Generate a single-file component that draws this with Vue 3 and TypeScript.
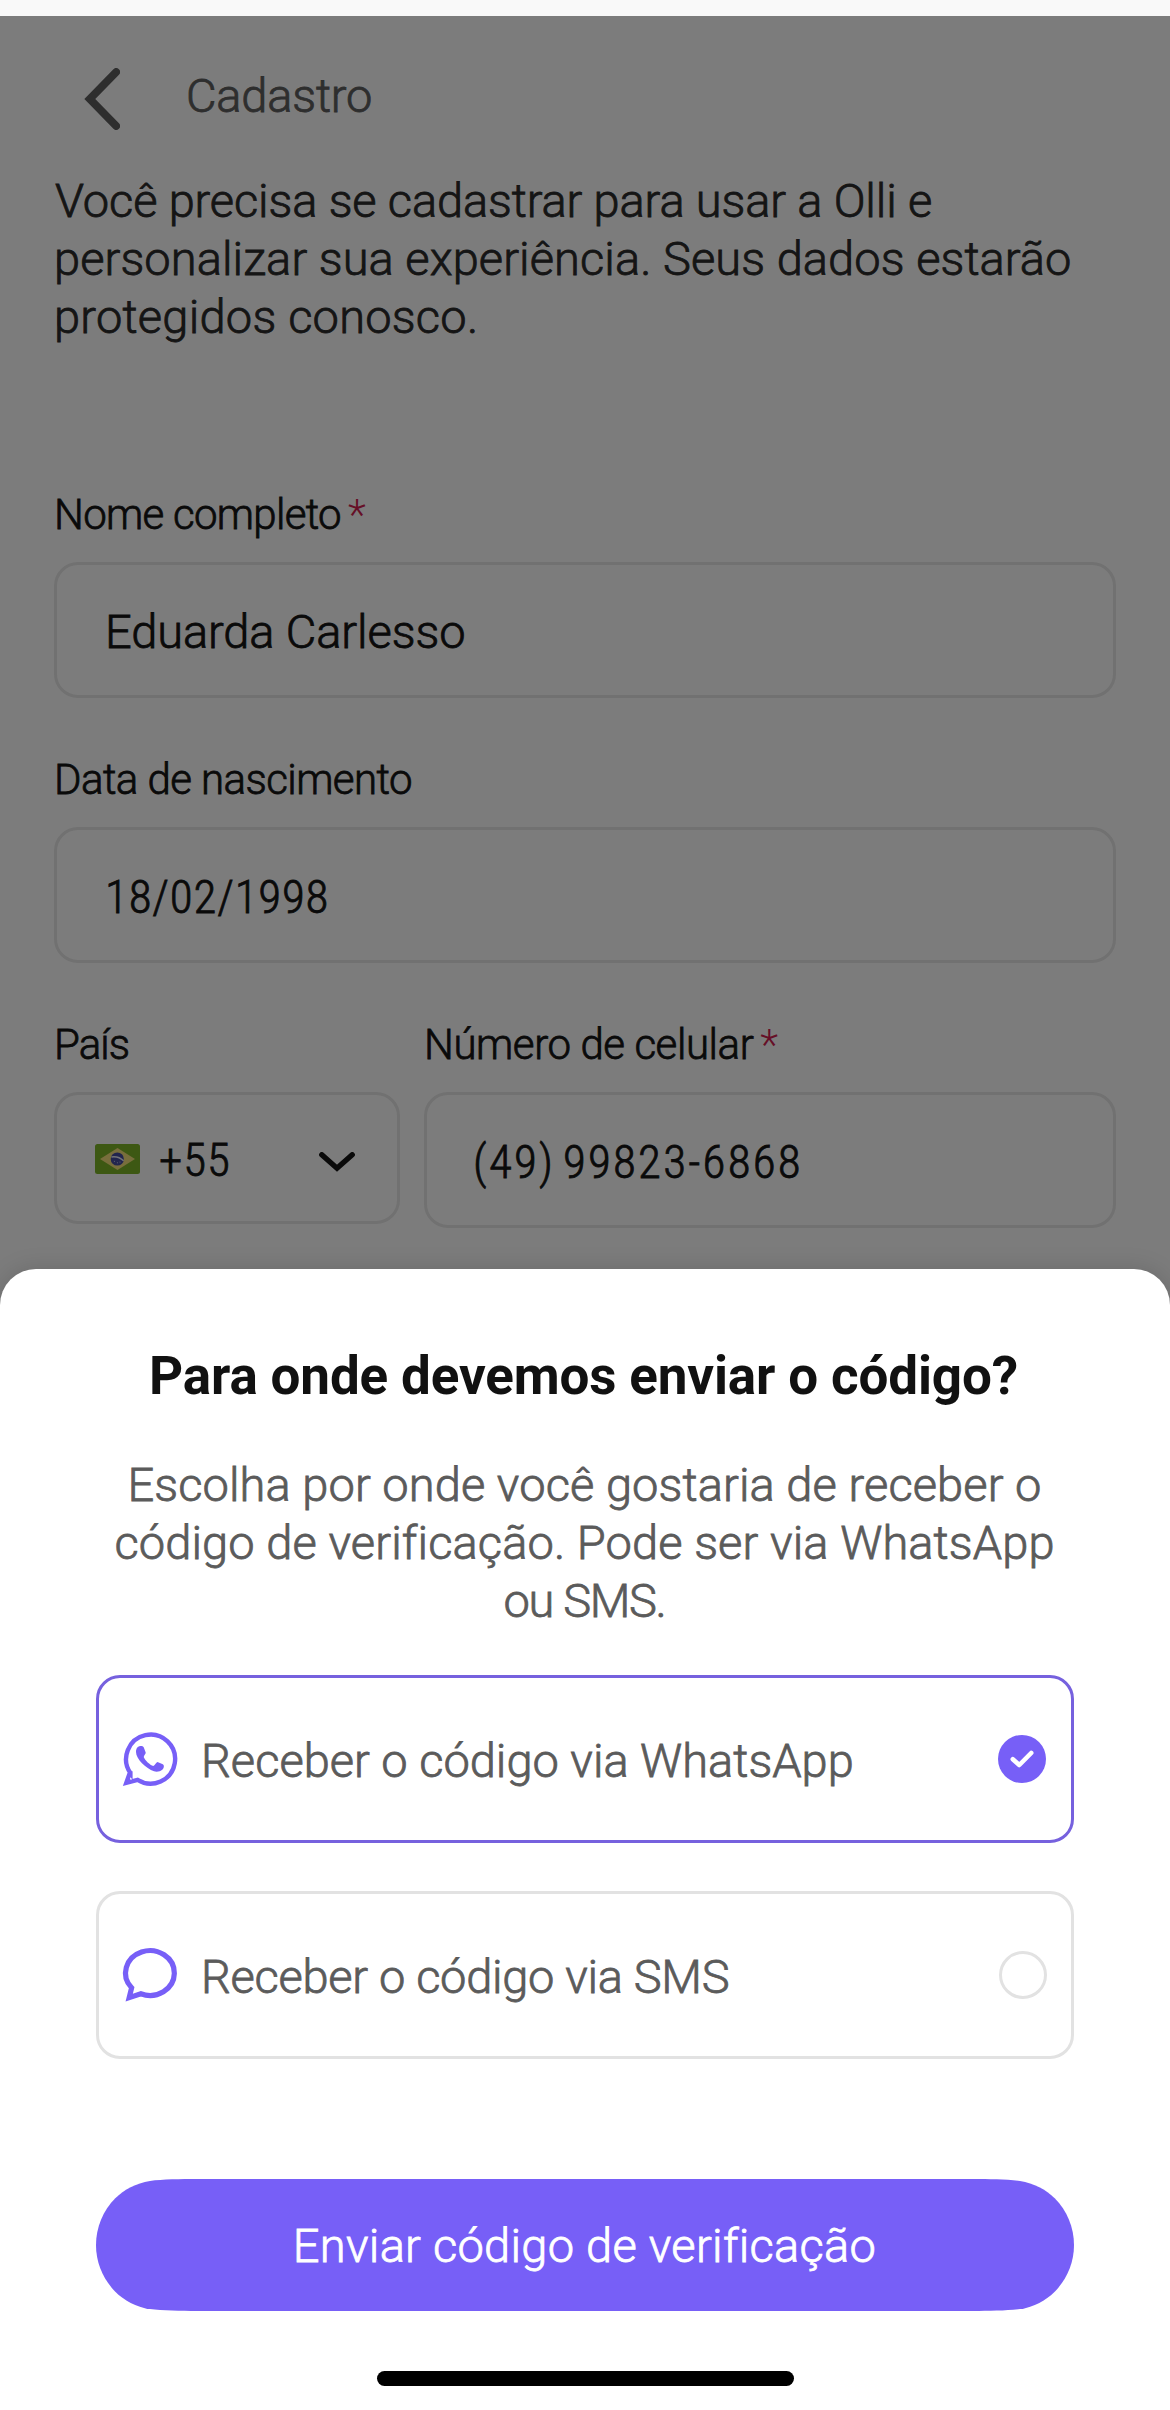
<script setup lang="ts">
import { ref } from 'vue'

type Channel = 'whatsapp' | 'sms'

const selected = ref<Channel>('whatsapp')

const channels: { id: Channel; label: string }[] = [
  { id: 'whatsapp', label: 'Receber o código via WhatsApp' },
  { id: 'sms', label: 'Receber o código via SMS' },
]
</script>

<template>
  <div class="screen">
    <main class="page">
      <header class="topbar">
        <svg class="back" viewBox="0 0 36 62" aria-hidden="true">
          <polyline points="32.2,4 5.8,31 32.2,58" />
        </svg>
        <h1 class="topbar-title">Cadastro</h1>
      </header>

      <p class="intro">
        <span class="l1">Você precisa se cadastrar para usar a Olli e</span>
        <span class="l2">personalizar sua experiência. Seus dados estarão</span>
        <span class="l3">protegidos conosco.</span>
      </p>

      <form class="form">
        <div class="field">
          <div class="label name">Nome completo<span class="req">*</span></div>
          <div class="input"><span class="person">Eduarda Carlesso</span></div>
        </div>
        <div class="field">
          <div class="label birth">Data de nascimento</div>
          <div class="input"><span class="date">18/02/1998</span></div>
        </div>
        <div class="row">
          <div class="field">
            <div class="label country">País</div>
            <div class="input select">
              <svg class="flag" viewBox="0 0 45 30" aria-hidden="true">
                <rect width="45" height="30" rx="2.5" fill="#7ab026" />
                <path d="M22.5 4 40 15 22.5 26 5 15Z" fill="#f0dc78" />
                <circle cx="22.3" cy="15" r="6.6" fill="#454a9c" />
                <path d="M16.4 12.9C20.5 12.3 25.5 13.7 28.6 16.8" fill="none" stroke="#e4e6f2" stroke-width="1.5" />
                <circle cx="19.4" cy="17.2" r=".5" fill="#dfe2f0" />
                <circle cx="22.4" cy="18.8" r=".5" fill="#dfe2f0" />
                <circle cx="25" cy="18" r=".5" fill="#dfe2f0" />
              </svg>
              <span class="ddi">+55</span>
              <svg class="caret" viewBox="0 0 36 20" aria-hidden="true">
                <polyline points="2.8,2.8 18,16.2 33.2,2.8" />
              </svg>
            </div>
          </div>
          <div class="field">
            <div class="label mobile">Número de celular<span class="req">*</span></div>
            <div class="input"><span class="phone">(49) 99823-6868</span></div>
          </div>
        </div>
      </form>
      <div class="overlay"></div>
    </main>

    <section class="sheet">
      <h2 class="sheet-title">Para onde devemos enviar o código?</h2>
      <p class="sheet-text">
        <span class="t1">Escolha por onde você gostaria de receber o</span>
        <span class="t2">código de verificação. Pode ser via WhatsApp</span>
        <span class="t3">ou SMS.</span>
      </p>

      <div class="options">
        <div
          v-for="c in channels"
          :key="c.id"
          class="option"
          :class="[c.id, { active: selected === c.id }]"
          @click="selected = c.id"
        >
          <svg v-if="c.id === 'whatsapp'" class="icon" viewBox="0 0 54 54" aria-hidden="true">
            <path class="line" stroke-width="4.4" d="M7.4 39.2 3.3 50.8 14.6 47.9A24.5 24.5 0 1 0 7.4 41Z" />
            <path
              class="solid"
              d="M13 20C13 16 15 14 18 14 19.5 14 20.5 14.6 21 16L22.7 20.5C23 21.8 21 23.2 20.7 25 22 28.4 27 33 30.3 34 31.8 33.4 33 30.4 34.5 30L39.8 32.2C41.5 33 41 36 39.5 37.5 37 40 33 40 31 39.3 23 36.5 13 27 13 20Z"
            />
          </svg>
          <svg v-else class="icon" viewBox="0 0 54 54" aria-hidden="true">
            <path class="line" stroke-width="5.2" d="M8.6 39.8 6.2 49.6 17.8 45.8A24.4 22.4 0 1 0 8.6 39.8Z" />
          </svg>
          <span class="option-label">{{ c.label }}</span>
          <svg v-if="selected === c.id" class="check" viewBox="0 0 48 48" aria-hidden="true">
            <circle cx="24" cy="24" r="24" />
            <polyline points="14.8,24.2 21.3,30 33.2,18" />
          </svg>
          <span v-else class="radio"></span>
        </div>
      </div>

      <button class="submit" type="button"><span>Enviar código de verificação</span></button>
      <div class="home-indicator"></div>
    </section>
  </div>
</template>

<style>
body {
  margin: 0;
  background: #fff;
}
</style>

<style scoped>
.screen {
  display: flex;
  flex-direction: column;
  width: 1170px;
  height: 2410px;
  overflow: hidden;
  box-sizing: border-box;
  border-top: 16px solid #f9f9f9;
  font-family: Roboto, 'Liberation Sans', sans-serif;
  font-weight: 300;
  font-size: 47px;
  -webkit-text-stroke: 0.8px currentColor;
  background: #7c7c7c;
}
.page {
  position: relative;
  box-sizing: border-box;
  height: 1253px;
  padding: 52px 54px 0;
  background: #f9f9f9;
}
.overlay {
  position: absolute;
  inset: 0;
  background: rgba(0, 0, 0, 0.5);
}
.topbar {
  display: flex;
  height: 64px;
  padding-left: 30px;
  color: #5c5c5c;
}
.back {
  width: 36px;
  height: 62px;
  margin-right: 66px;
  fill: none;
  stroke: currentColor;
  stroke-width: 7.8;
  stroke-linecap: round;
}
.topbar-title {
  margin: 0;
  font: inherit;
  line-height: 56px;
  letter-spacing: -0.19px;
}
.intro {
  margin: 40px 0 0;
  line-height: 58px;
  color: #2a2a2a;
  white-space: nowrap;
}
.intro span,
.sheet-text span {
  display: block;
}
.l1 { letter-spacing: -0.13px; padding-left: 1px; }
.l2 { letter-spacing: 0.07px; }
.l3 { letter-spacing: 0.23px; }
.form {
  display: flex;
  flex-direction: column;
  gap: 58px;
  margin-top: 145px;
  color: #141414;
}
.label {
  height: 48px;
  margin-bottom: 23px;
  font-size: 42px;
  line-height: 48px;
  white-space: nowrap;
}
.name { letter-spacing: -0.71px; }
.birth { letter-spacing: -0.57px; }
.country { letter-spacing: -0.9px; }
.mobile { letter-spacing: -0.43px; }
.req {
  margin-left: 7px;
  color: #cc1f4f;
  -webkit-text-stroke: 0;
}
.input {
  display: flex;
  align-items: center;
  box-sizing: border-box;
  height: 136px;
  padding: 3px 48px 0;
  border: 3px solid #e2e2e2;
  border-radius: 24px;
}
.person { letter-spacing: -0.1px; }
.date,
.ddi,
.phone {
  font-stretch: 75%;
}
.date { letter-spacing: 0.8px; }
.phone { letter-spacing: 2.2px; word-spacing: -5px; margin-left: -2px; }
.ddi { letter-spacing: 1px; margin-left: 19px; }
.row {
  display: grid;
  grid-template-columns: 346px 1fr;
  gap: 24px;
}
.select {
  height: 132px;
  padding: 2px 42px 0 38px;
}
.flag {
  width: 45px;
  height: 30px;
}
.caret {
  width: 36px;
  height: 20px;
  margin: 5px 0 0 auto;
  fill: none;
  stroke: #141414;
  stroke-width: 5.4;
  stroke-linecap: round;
}
.sheet {
  position: relative;
  flex: 1;
  display: flex;
  flex-direction: column;
  align-items: center;
  padding: 75px 96px 0;
  border-radius: 36px 36px 0 0;
  background: #fff;
  box-shadow: 0 0 24px rgba(0, 0, 0, 0.14);
}
.sheet-title {
  margin: 0 3px 0 0;
  font-size: 53px;
  font-weight: 700;
  line-height: 64px;
  letter-spacing: -0.16px;
  color: #111;
  white-space: nowrap;
  -webkit-text-stroke: 0;
}
.sheet-text {
  margin: 48px 1px 45px 0;
  line-height: 58px;
  text-align: center;
  color: #5b5b5b;
  white-space: nowrap;
}
.t1 { letter-spacing: 0.09px; }
.t2 { letter-spacing: 0.1px; }
.t3 { letter-spacing: -1.3px; }
.options {
  display: flex;
  flex-direction: column;
  gap: 48px;
  width: 100%;
}
.option {
  display: flex;
  align-items: center;
  box-sizing: border-box;
  height: 168px;
  padding: 0 24px;
  border: 3px solid #e2e2e2;
  border-radius: 24px;
}
.option.active {
  border-color: #7661de;
}
.icon {
  width: 54px;
  height: 54px;
  overflow: visible;
}
.line {
  fill: none;
  stroke: #775ff7;
}
.solid {
  fill: #775ff7;
}
.option-label {
  margin: 3px auto 0 24px;
  color: #5b5b5b;
  white-space: nowrap;
}
.sms .option-label {
  letter-spacing: -0.3px;
}
.check {
  width: 48px;
  height: 48px;
  margin-right: 1px;
}
.check circle {
  fill: #775ff7;
}
.check polyline {
  fill: none;
  stroke: #fff;
  stroke-width: 4.6;
  stroke-linecap: round;
  stroke-linejoin: round;
}
.radio {
  box-sizing: border-box;
  width: 48px;
  height: 48px;
  border: 3px solid #e2e2e2;
  border-radius: 50%;
}
.submit {
  width: 978px;
  height: 132px;
  margin: 120px 0 60px;
  padding: 1px 1px 0 0;
  border: 0;
  background: #775ff7;
  color: #fff;
  font: inherit;
  letter-spacing: 0.28px;
  -webkit-text-stroke: inherit;
  /* Pill with continuous-curvature ends */
  clip-path: path('M0 66C0 48.5 7 31.7 19.3 19.3 28 10.6 40 4 54 1.9 66 .2 85 0 101 0H877C893 0 912 .2 924 1.9 938 4 950 10.6 958.7 19.3 971 31.7 978 48.5 978 66 978 83.5 971 100.3 958.7 112.7 950 121.4 938 128 924 130.1 912 131.8 893 132 877 132H101C85 132 66 131.8 54 130.1 40 128 28 121.4 19.3 112.7 7 100.3 0 83.5 0 66Z');
}
.home-indicator {
  width: 417px;
  height: 15px;
  border-radius: 8px;
  background: #000;
}
</style>
